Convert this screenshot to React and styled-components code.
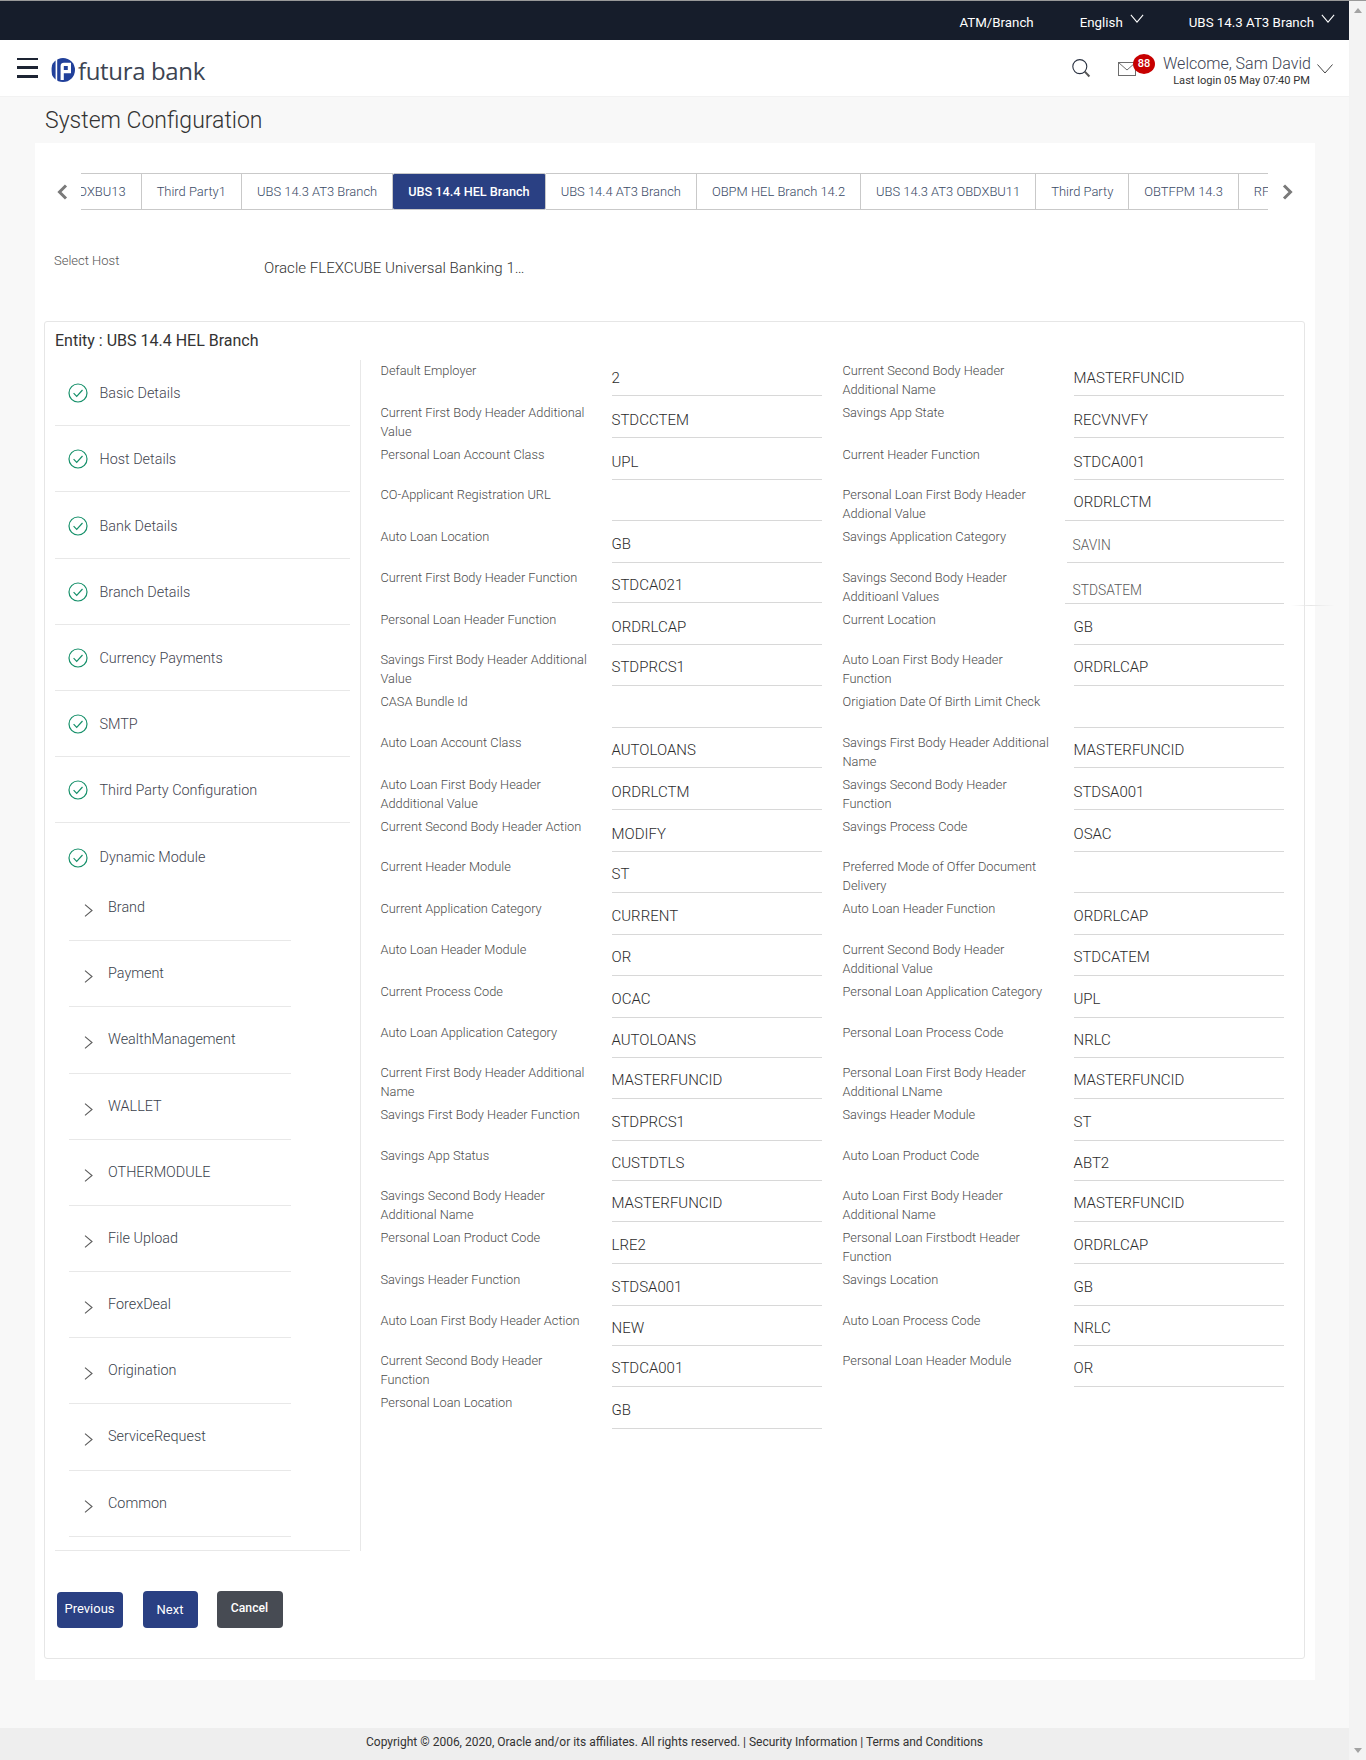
import React from "react";
import styled, { createGlobalStyle } from "styled-components";

const Global = createGlobalStyle`
  html, body { margin: 0; padding: 0; background: #f8f8f8; }
  body { font-family: Roboto, "Liberation Sans", sans-serif; overflow: hidden; }
  * { box-sizing: border-box; }
`;

const Shell = styled.div`display: flex; width: 1366px; height: 1760px;`;
const Main = styled.div`display: flex; flex-direction: column; width: 1349px; height: 100%;`;
const Scrollbar = styled.div`
  width: 17px; height: 100%; background: #f3f3f3; display: flex; flex-direction: column;
  justify-content: space-between; align-items: center; padding: 7px 0 7px; border-top: 1px solid #999;
`;
const ScrollUp = styled.span`width: 0; height: 0; border-left: 4px solid transparent; border-right: 4px solid transparent; border-bottom: 5px solid #a3a3a3;`;
const ScrollDown = styled.span`width: 0; height: 0; border-left: 4px solid transparent; border-right: 4px solid transparent; border-top: 5px solid #a3a3a3;`;

const TopBar = styled.div`
  height: 40px; background: #161d2b; border-top: 1px solid #999; color: #fff;
  display: flex; align-items: center; justify-content: flex-end; padding: 3px 14px 0 0;
  font-size: 13.3px; font-weight: 400;
`;
const TopItem = styled.span`margin-left: ${p => p.$gap}px;`;
const TopChevron = styled.svg`width: 14px; height: 9px; margin: -8px 0 0 ${p => p.$gap}px; fill: none; stroke: #fff; stroke-width: 1.2;`;

const Header = styled.header`
  height: 57px; background: #fff; display: flex; align-items: center; padding: 0 16px 0 17px;
  border-bottom: 1px solid #f2f2f2; flex: none;
`;
const Burger = styled.div`width: 21px; height: 20px; display: flex; flex-direction: column; justify-content: space-between; margin-top: -1px;`;
const BurgerBar = styled.span`height: 2.5px; background: #1d2433;`;
const LogoMark = styled.svg`width: 24px; height: 24px; margin: 4px 0 0 13px; flex: none;`;
const BrandName = styled.span`
  font-family: "Open Sans", sans-serif; font-size: 24px; color: #3c4452; margin: 5px 0 0 3px; letter-spacing: -0.35px; line-height: 30px;
`;
const HeaderRight = styled.div`margin-left: auto; display: flex; align-items: center;`;
const SearchIcon = styled.svg`width: 19px; height: 19px; fill: none; stroke: #2a3242; stroke-width: 1.1;`;
const MailWrap = styled.div`position: relative; width: 18px; height: 14px; margin-left: 27px; margin-top: 1px;`;
const MailIcon = styled.svg`display: block; width: 18px; height: 14px; fill: none; stroke: #6d6d6d; stroke-width: 1;`;
const Badge = styled.span`
  position: absolute; left: 15px; top: -8px; width: 22px; height: 20px; border-radius: 50%;
  background: #c70000; color: #fff; font-size: 11px; font-weight: 500; display: flex; align-items: center; justify-content: center;
`;
const Welcome = styled.div`margin-left: 27px; width: 147px; text-align: right; margin-top: 6px;`;
const WelcomeName = styled.div`font-size: 16px; font-weight: 300; color: #3b4252; line-height: 20px; white-space: nowrap;`;
const LastLogin = styled.div`font-size: 11.1px; color: #333; line-height: 14px; white-space: nowrap;`;
const UserChevron = styled.svg`width: 16px; height: 10px; margin-left: 7px; margin-top: 2px; fill: none; stroke: #444; stroke-width: 1;`;

const Content = styled.main`flex: 1; display: flex; flex-direction: column; background: #f8f8f8;`;
const PageTitle = styled.h1`
  margin: 0; height: 46px; padding-left: 45px; font-size: 23px; line-height: 48px; font-weight: 300; color: #333; white-space: nowrap;
`;
const Panel = styled.section`margin-left: 35px; width: 1280px; height: 1537px; background: #fff; padding-top: 30px; position: relative;`;

const TabRow = styled.div`display: flex; align-items: center; height: 37px; padding-left: 22px; width: 1258px;`;
const TabArrow = styled.svg`width: 11px; height: 16px; flex: none; fill: none; stroke: #7a7a7a; stroke-width: 3;`;
const TabViewport = styled.div`width: 1187px; margin: 0 14px 0 13px; overflow: hidden; height: 37px; flex: none;`;
const TabStrip = styled.div`display: flex; height: 37px; margin-left: ${p => p.$offset}px; width: max-content;`;
const Tab = styled.div`
  height: 37px; padding: 0 15px; display: flex; align-items: center; white-space: nowrap;
  border: 1px solid #c9c9c9; border-left: 0; border-right-width: 1px;
  background: ${p => (p.$active ? "#2a4083" : "#fff")};
  color: ${p => (p.$active ? "#fff" : "#3a4a66")};
  font-size: ${p => (p.$active ? 12.7 : 12.95)}px;
  font-weight: ${p => (p.$active ? 500 : 300)};
  border-radius: ${p => (p.$active ? "2px" : 0)};
`;

const HostRow = styled.div`display: flex; margin: 43px 0 0 19px; height: 25px; align-items: flex-start;`;
const HostLabel = styled.span`width: 210px; font-size: 13px; line-height: 16px; color: #555; font-weight: 300;`;
const HostValue = styled.span`font-size: 15.1px; line-height: 20px; padding-top: 5px; color: #333; font-weight: 300; box-sizing: content-box;`;

const EntityBox = styled.div`
  margin: 43px 0 0 9px; width: 1261px; border: 1px solid #e6e6e6; border-radius: 3px; padding-bottom: 30px;
`;
const EntityTitle = styled.div`height: 38px; padding-left: 10px; font-size: 16px; line-height: 37px; color: #333;`;
const Columns = styled.div`display: flex; align-items: stretch;`;

const Nav = styled.nav`width: 295px; margin: 0.3px 0 0 10px; border-bottom: 1px solid #e8e8e8; padding-bottom: 13px; flex: none;`;
const NavItem = styled.div`
  height: 66.1px; display: flex; align-items: center; padding: 2px 0 0 12.5px;
  border-bottom: ${p => (p.$open ? "0" : "1px solid #e8e8e8")};
`;
const Check = styled.svg`width: 20px; height: 20px; flex: none; fill: none; stroke: #16906a; margin-top: -1px;`;
const NavLabel = styled.span`margin-left: 12px; font-size: 14.4px; font-weight: 300; color: #3f4450;`;
const OpenHead = styled(NavItem)`height: 52px; align-items: flex-start; padding-top: 26px;`;
const SubItem = styled.div`
  height: 66.2px; margin-left: 14px; width: 222px; border-bottom: 1px solid #e8e8e8; display: flex; align-items: flex-start;
  padding: 24px 0 0 15px;
`;
const SubChevron = styled.svg`width: 9px; height: 13px; flex: none; margin-top: 5px; fill: none; stroke: #5c5c5c; stroke-width: 1.1;`;
const SubLabel = styled.span`margin-left: 15px; font-size: 14.4px; font-weight: 300; line-height: 18px; color: #3a3f4c;`;

const VRule = styled.div`width: 1px; background: #e8e8e8; margin-left: 10px; flex: none;`;
const Form = styled.div`padding-left: 19.5px; width: 920px; position: relative;`;
const FormRow = styled.div`display: flex; gap: 20.5px; height: ${p => p.$h}px; align-items: flex-end; width: 904px;`;
const Field = styled.div`display: grid; grid-template-columns: 231px 1fr; width: 441.5px; align-items: end;`;
const FieldLabel = styled.label`
  display: block; width: 208px; height: ${p => (p.$raised ? 36 : 35)}px; font-size: 12.8px; line-height: 19px; font-weight: 300; color: #4c4c4c;
`;
const FieldValue = styled.div`
  height: 35px; line-height: ${p => p.$lineH || (p.$raised ? 32 : 34)}px; font-size: 15px; font-weight: 300; color: #2c2c2c; border-bottom: 1px solid #d8d8d8;
  margin-left: ${p => -(p.$inset || 0)}px; padding-left: ${p => (p.$inset || 0) - (p.$nudge || 0)}px;
  ${p => (p.$shift ? `margin-bottom: ${-p.$shift}px;` : "")}
  ${p => (p.$dim ? `color: #5a5a5a; font-size: 13.8px; font-weight: 300;` : "")}
`;
const EdgeShadow = styled.div`
  position: absolute; left: 930px; top: 245px; width: 44px; height: 1px;
  background: linear-gradient(90deg, transparent, #e6e6e6 45%, transparent);
`;

const Actions = styled.div`display: flex; align-items: flex-end; margin: 40px 0 0 11.5px; height: 37px;`;
const Button = styled.button`
  border: 0; border-radius: 4px; color: #fff; font: ${p => p.$weight || 400} ${p => p.$size || 13}px Roboto, sans-serif; padding: 0 0 ${p => p.$lift}px;
  width: ${p => p.$w}px; height: ${p => p.$h || 37}px; margin-right: ${p => p.$gap || 0}px;
  background: ${p => (p.$dark ? "#474b53" : "#2a4083")};
`;

const Footer = styled.footer`
  height: 32px; background: #eee; font-size: 12px; color: #333; display: flex; justify-content: center; padding-top: 6px; line-height: 17px; flex: none; margin-top: auto;
`;

const tabs = ["UBS 14.3 AT3 OBDXBU13", "Third Party1", "UBS 14.3 AT3 Branch", "UBS 14.4 HEL Branch", "UBS 14.4 AT3 Branch", "OBPM HEL Branch 14.2", "UBS 14.3 AT3 OBDXBU11", "Third Party", "OBTFPM 14.3", "RFPM 14.3"];
const nav = ["Basic Details", "Host Details", "Bank Details", "Branch Details", "Currency Payments", "SMTP", "Third Party Configuration"];
const subs = ["Brand", "Payment", "WealthManagement", "WALLET", "OTHERMODULE", "File Upload", "ForexDeal", "Origination", "ServiceRequest", "Common"];

const raisedRows = new Set([3, 4, 7, 8, 12, 13, 14, 15, 17, 18, 20, 21, 22, 24, 25]);

const rows = [
  [36, ["Default Employer", "2"], ["Current Second Body Header Additional Name", "MASTERFUNCID"]],
  [42, ["Current First Body Header Additional Value", "STDCCTEM"], ["Savings App State", "RECVNVFY"]],
  [42, ["Personal Loan Account Class", "UPL"], ["Current Header Function", "STDCA001"]],
  [41, ["CO-Applicant Registration URL", ""], ["Personal Loan First Body Header Addional Value", "ORDRLCTM", { $inset: 9 }]],
  [42, ["Auto Loan Location", "GB"], ["Savings Application Category", "SAVIN", { $inset: 7, $dim: true, $nudge: 1, $lineH: 34.5 }]],
  [40, ["Current First Body Header Function", "STDCA021"], ["Savings Second Body Header Additioanl Values", "STDSATEM", { $inset: 9, $nudge: 1, $dim: true, $shift: 1.4, $lineH: 42 }]],
  [42, ["Personal Loan Header Function", "ORDRLCAP"], ["Current Location", "GB"]],
  [41, ["Savings First Body Header Additional Value", "STDPRCS1"], ["Auto Loan First Body Header Function", "ORDRLCAP"]],
  [42, ["CASA Bundle Id", ""], ["Origiation Date Of Birth Limit Check", ""]],
  [40, ["Auto Loan Account Class", "AUTOLOANS"], ["Savings First Body Header Additional Name", "MASTERFUNCID"]],
  [42, ["Auto Loan First Body Header Addditional Value", "ORDRLCTM"], ["Savings Second Body Header Function", "STDSA001"]],
  [42, ["Current Second Body Header Action", "MODIFY"], ["Savings Process Code", "OSAC"]],
  [41, ["Current Header Module", "ST"], ["Preferred Mode of Offer Document Delivery", ""]],
  [42, ["Current Application Category", "CURRENT"], ["Auto Loan Header Function", "ORDRLCAP"]],
  [41, ["Auto Loan Header Module", "OR"], ["Current Second Body Header Additional Value", "STDCATEM"]],
  [42, ["Current Process Code", "OCAC"], ["Personal Loan Application Category", "UPL"]],
  [40, ["Auto Loan Application Category", "AUTOLOANS"], ["Personal Loan Process Code", "NRLC"]],
  [41, ["Current First Body Header Additional Name", "MASTERFUNCID"], ["Personal Loan First Body Header Additional LName", "MASTERFUNCID"]],
  [42, ["Savings First Body Header Function", "STDPRCS1"], ["Savings Header Module", "ST"]],
  [40, ["Savings App Status", "CUSTDTLS"], ["Auto Loan Product Code", "ABT2"]],
  [41, ["Savings Second Body Header Additional Name", "MASTERFUNCID"], ["Auto Loan First Body Header Additional Name", "MASTERFUNCID"]],
  [42, ["Personal Loan Product Code", "LRE2"], ["Personal Loan Firstbodt Header Function", "ORDRLCAP"]],
  [42, ["Savings Header Function", "STDSA001"], ["Savings Location", "GB"]],
  [40, ["Auto Loan First Body Header Action", "NEW"], ["Auto Loan Process Code", "NRLC"]],
  [41, ["Current Second Body Header Function", "STDCA001"], ["Personal Loan Header Module", "OR"]],
  [42, ["Personal Loan Location", "GB"], null],
];

const CheckIcon = () => (
  <Check viewBox="0 0 20 20">
    <circle cx="10" cy="10" r="9" strokeWidth="1.2" />
    <path d="M5.6 10.2l3.1 3.1 5.8-6.3" strokeWidth="1.2" />
  </Check>
);

const Chevron = ({ as: C, gap }) => (
  <C viewBox="0 0 16 10" $gap={gap} preserveAspectRatio="none"><path d="M1 1l7 8 7-8" /></C>
);

const FieldCell = ({ data, raised }) => {
  const [label, value, opts] = data;
  return (
    <Field>
      <FieldLabel $raised={raised}>{label}</FieldLabel>
      <FieldValue $raised={raised} {...(opts || {})}>{value}</FieldValue>
    </Field>
  );
};

export default function App() {
  return (
    <Shell>
      <Global />
      <Main>
        <TopBar>
          <TopItem>ATM/Branch</TopItem>
          <TopItem $gap={46}>English</TopItem>
          <Chevron as={TopChevron} gap={7} />
          <TopItem $gap={45}>UBS 14.3 AT3 Branch</TopItem>
          <Chevron as={TopChevron} gap={7} />
        </TopBar>
        <Header>
          <Burger><BurgerBar /><BurgerBar /><BurgerBar /></Burger>
          <LogoMark viewBox="0 0 24 24">
            <circle cx="12" cy="12" r="12" fill="#21409a" />
            <path d="M5.4 0v24" stroke="#fff" strokeWidth="1.6" />
            <path d="M0 0h2.6c-1.4 3-2 6-2 12s.6 9 2 12H0z" fill="#fff" />
            <path d="M9.6 22V8c0-2 1.3-3.2 3.2-3.2H20v10.4h-7.2V22zm3.2-10h4v-4h-4z" fill="#fff" fillRule="evenodd" />
          </LogoMark>
          <BrandName>futura bank</BrandName>
          <HeaderRight>
            <SearchIcon viewBox="0 0 19 19">
              <circle cx="7.8" cy="7.6" r="7" />
              <path d="M12.8 12.6l4.6 4.9" strokeWidth="2" stroke="#555" />
            </SearchIcon>
            <MailWrap>
              <MailIcon viewBox="0 0 18 14">
                <rect x="0.5" y="0.5" width="17" height="13" />
                <path d="M0.5 0.5L9 8l8.5-7.5" />
              </MailIcon>
              <Badge>88</Badge>
            </MailWrap>
            <Welcome>
              <WelcomeName>Welcome, Sam David</WelcomeName>
              <LastLogin>Last login 05 May 07:40 PM</LastLogin>
            </Welcome>
            <UserChevron viewBox="0 0 16 10"><path d="M0.5 0.5L8 9l7.5-8.5" /></UserChevron>
          </HeaderRight>
        </Header>
        <Content>
          <PageTitle>System Configuration</PageTitle>
          <Panel>
            <TabRow>
              <TabArrow viewBox="0 0 11 16"><path d="M9 1.5L2.5 8 9 14.5" /></TabArrow>
              <TabViewport>
                <TabStrip $offset={-114.5}>
                  {tabs.map((t, i) => <Tab key={t} $active={i === 3}>{t}</Tab>)}
                </TabStrip>
              </TabViewport>
              <TabArrow viewBox="0 0 11 16"><path d="M2 1.5L8.5 8 2 14.5" /></TabArrow>
            </TabRow>
            <HostRow>
              <HostLabel>Select Host</HostLabel>
              <HostValue>Oracle FLEXCUBE Universal Banking 1…</HostValue>
            </HostRow>
            <EntityBox>
              <EntityTitle>Entity : UBS 14.4 HEL Branch</EntityTitle>
              <Columns>
                <Nav>
                  {nav.map(n => (
                    <NavItem key={n}><CheckIcon /><NavLabel>{n}</NavLabel></NavItem>
                  ))}
                  <OpenHead $open><CheckIcon /><NavLabel>Dynamic Module</NavLabel></OpenHead>
                  {subs.map(s => (
                    <SubItem key={s}>
                      <SubChevron viewBox="0 0 9 13"><path d="M1 .6l7 5.9-7 5.9" /></SubChevron>
                      <SubLabel>{s}</SubLabel>
                    </SubItem>
                  ))}
                </Nav>
                <VRule />
                <Form>
                  {rows.map(([h, a, b], i) => (
                    <FormRow key={a[0]} $h={h}>
                      <FieldCell data={a} raised={raisedRows.has(i)} />
                      {b && <FieldCell data={b} raised={raisedRows.has(i)} />}
                    </FormRow>
                  ))}
                  <EdgeShadow />
                </Form>
              </Columns>
              <Actions>
                <Button $w={66} $h={36} $gap={20} $lift={3}>Previous</Button>
                <Button $w={55} $gap={19} $lift={0}>Next</Button>
                <Button $w={66} $dark $weight={500} $size={12.2} $lift={2}>Cancel</Button>
              </Actions>
            </EntityBox>
          </Panel>
        </Content>
        <Footer>Copyright © 2006, 2020, Oracle and/or its affiliates. All rights reserved. | Security Information | Terms and Conditions</Footer>
      </Main>
      <Scrollbar><ScrollUp /><ScrollDown /></Scrollbar>
    </Shell>
  );
}
